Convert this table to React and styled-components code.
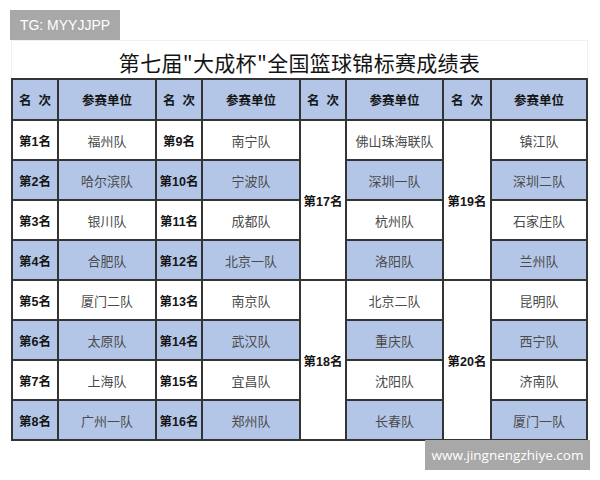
import React from 'react';
import styled, { createGlobalStyle } from 'styled-components';

const GlobalStyle = createGlobalStyle`
  html, body {
    margin: 0;
    padding: 0;
    background: #ffffff;
  }
  body {
    font-family: "Liberation Sans", "Noto Sans CJK SC", sans-serif;
  }
`;

const leftPairs = [
  ['第1名', '福州队', '第9名', '南宁队'],
  ['第2名', '哈尔滨队', '第10名', '宁波队'],
  ['第3名', '银川队', '第11名', '成都队'],
  ['第4名', '合肥队', '第12名', '北京一队'],
  ['第5名', '厦门二队', '第13名', '南京队'],
  ['第6名', '太原队', '第14名', '武汉队'],
  ['第7名', '上海队', '第15名', '宜昌队'],
  ['第8名', '广州一队', '第16名', '郑州队'],
];

const groups = [
  { rankA: '第17名', teamsA: ['佛山珠海联队', '深圳一队', '杭州队', '洛阳队'], rankB: '第19名', teamsB: ['镇江队', '深圳二队', '石家庄队', '兰州队'] },
  { rankA: '第18名', teamsA: ['北京二队', '重庆队', '沈阳队', '长春队'], rankB: '第20名', teamsB: ['昆明队', '西宁队', '济南队', '厦门一队'] },
];

export default function App() {
  return (
    <Page>
      <GlobalStyle />
      <Tag>TG: MYYJJPP</Tag>
      <Sheet>
        <Title>第七届"大成杯"全国篮球锦标赛成绩表</Title>
        <Grid>
          {[0, 1, 2, 3].map(i => (
            <React.Fragment key={i}>
              <Cell head bold>名&nbsp;&nbsp;次</Cell>
              <Cell head bold>参赛单位</Cell>
            </React.Fragment>
          ))}
          {groups.map((g, gi) => (
            <React.Fragment key={gi}>
              {[0, 1, 2, 3].map(r => {
                const row = leftPairs[gi * 4 + r];
                const blue = r % 2 === 1;
                return (
                  <React.Fragment key={r}>
                    <Cell blue={blue} bold>{row[0]}</Cell>
                    <Cell blue={blue}>{row[1]}</Cell>
                    <Cell blue={blue} bold>{row[2]}</Cell>
                    <Cell blue={blue}>{row[3]}</Cell>
                    {r === 0 && <Cell bold span={4}>{g.rankA}</Cell>}
                    <Cell blue={blue}>{g.teamsA[r]}</Cell>
                    {r === 0 && <Cell bold span={4}>{g.rankB}</Cell>}
                    <Cell blue={blue}>{g.teamsB[r]}</Cell>
                  </React.Fragment>
                );
              })}
            </React.Fragment>
          ))}
        </Grid>
      </Sheet>
      <Watermark>www.jingnengzhiye.com</Watermark>
    </Page>
  );
}

const Page = styled.div`
  position: relative;
  width: 600px;
  height: 480px;
  padding: 10px 0 0 0;
  box-sizing: border-box;
  overflow: hidden;
`;

const Tag = styled.div`
  margin-left: 10px;
  width: 110px;
  height: 30px;
  background: #a8a8a8;
  color: #ffffff;
  font-family: "Liberation Sans", sans-serif;
  font-size: 14px;
  display: flex;
  align-items: center;
  justify-content: center;
  box-sizing: border-box;
`;

const Sheet = styled.div`
  margin-left: 11px;
  width: 577px;
  display: flex;
  flex-direction: column;
`;

const Title = styled.div`
  height: 38px;
  border: 1px solid #f0f0f0;
  border-bottom: none;
  box-sizing: border-box;
  display: flex;
  align-items: center;
  justify-content: center;
  padding-top: 4px;
  font-family: "Noto Sans CJK SC", sans-serif;
  font-size: 21px;
  color: #141414;
  letter-spacing: 0.3px;
`;

const Grid = styled.div`
  display: grid;
  grid-template-columns: 44px 96px 44px 96px 44px 95px 46px 94px;
  grid-template-rows: 39px repeat(8, 38px);
  gap: 2px;
  padding: 2px;
  background: #343434;
`;

const Cell = styled.div`
  background: ${p => (p.head || p.blue ? '#b4c6e7' : '#ffffff')};
  grid-row: ${p => (p.span ? `span ${p.span}` : 'auto')};
  display: flex;
  align-items: center;
  justify-content: center;
  white-space: nowrap;
  font-family: "Liberation Sans", "Noto Sans CJK SC", sans-serif;
  font-size: ${p => (p.bold ? '12.5px' : '13px')};
  font-weight: ${p => (p.bold ? 700 : 400)};
  color: ${p => (p.bold ? '#151515' : '#4a4a4a')};
`;

const Watermark = styled.div`
  position: absolute;
  left: 425px;
  top: 440px;
  width: 165px;
  height: 30px;
  background: #a8a8a8;
  color: #ffffff;
  font-family: "Open Sans", sans-serif;
  font-size: 13.5px;
  display: flex;
  align-items: center;
  justify-content: center;
`;
